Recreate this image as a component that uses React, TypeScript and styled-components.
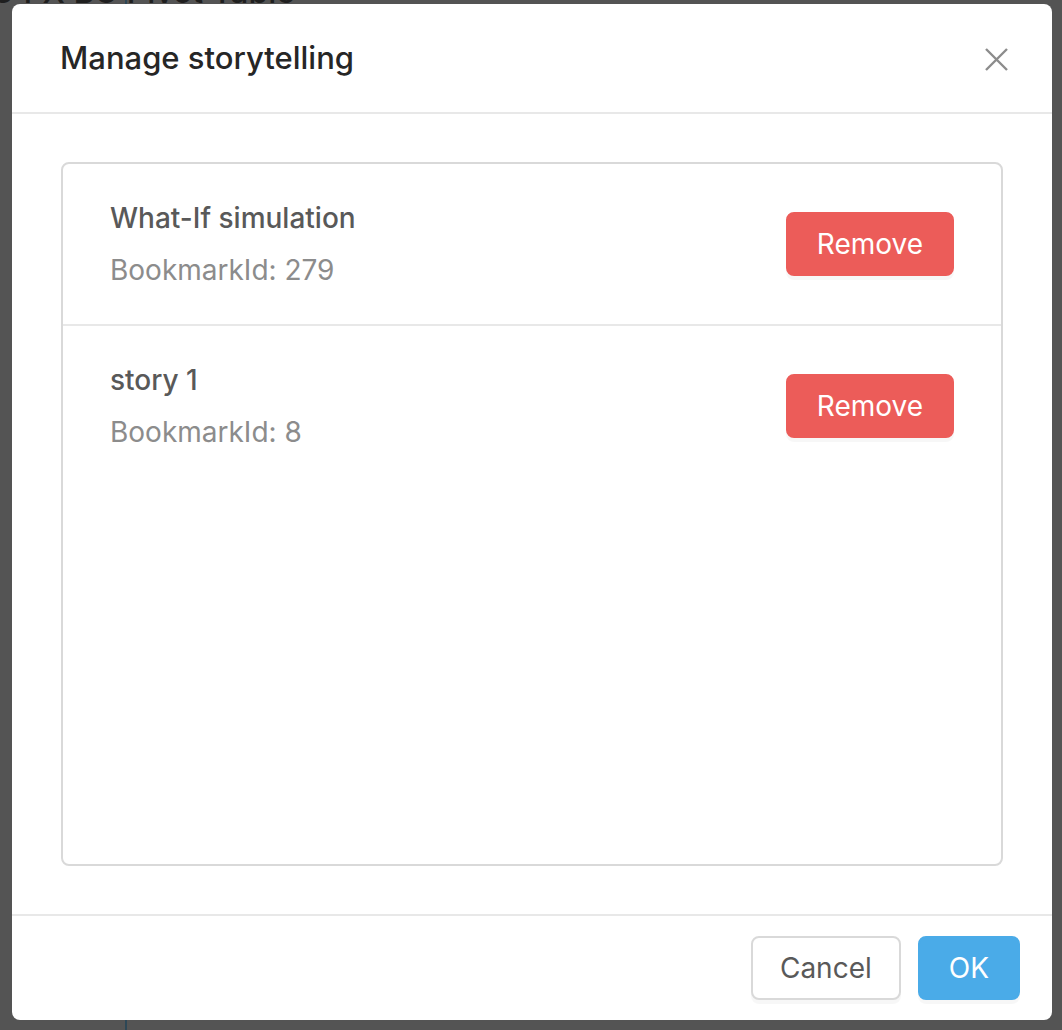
import styled, { createGlobalStyle } from "styled-components";

const GlobalStyle = createGlobalStyle`
  html, body {
    margin: 0;
    padding: 0;
    background: #545454;
    font-family: Inter, "Noto Sans", "Liberation Sans", sans-serif;
    -webkit-font-smoothing: antialiased;
  }
  * {
    box-sizing: border-box;
  }
`

const Page = styled.div`
  position: fixed;
  inset: 0;
  overflow: hidden;
  background: #545454;
`

const PageTitle = styled.h1`
  margin: -24px 0 0 -30px;
  font-size: 32px;
  line-height: 32px;
  font-weight: 500;
  color: #1f1f1f;
  white-space: nowrap;
`

const PageRule = styled.div`
  position: absolute;
  top: 0;
  bottom: 0;
  left: 125px;
  width: 2px;
  background: #2d4756;
`

const Overlay = styled.div`
  position: fixed;
  inset: 0;
  display: flex;
  padding: 4px 10px 10px 12px;
`

const Modal = styled.div`
  flex: 1;
  display: flex;
  flex-direction: column;
  background: #fff;
  border-radius: 8px;
  overflow: hidden;
`

const Header = styled.div`
  position: relative;
  display: flex;
  align-items: center;
  height: 110px;
  padding: 0 48px;
  border-bottom: 2px solid #e8e8e8;
`

const Title = styled.h2`
  margin: 0;
  font-size: 31px;
  line-height: 44px;
  font-weight: 500;
  color: #262626;
`

const CloseButton = styled.button`
  position: absolute;
  top: 0;
  right: 0;
  width: 112px;
  height: 110px;
  display: flex;
  align-items: center;
  justify-content: center;
  border: 0;
  background: transparent;
  cursor: pointer;
  color: #8c8c8c;
  padding: 0;
`

const Body = styled.div`
  flex: 1;
  padding: 48px 49px;
`

const ListBox = styled.div`
  height: 704px;
  border: 2px solid #d9d9d9;
  border-radius: 8px;
`

const Row = styled.div`
  display: flex;
  align-items: center;
  justify-content: space-between;
  padding: 32px 47px;
  border-bottom: 2px solid #e8e8e8;

  &:last-child {
    border-bottom: 0;
  }
`

const Meta = styled.div`
  display: flex;
  flex-direction: column;
  gap: 8px;
`

const ItemTitle = styled.div`
  font-size: 28px;
  line-height: 44px;
  font-weight: 500;
  color: #595959;
`

const ItemDesc = styled.div`
  font-size: 28px;
  line-height: 44px;
  color: #8c8c8c;
`

const Button = styled.button<{ $variant: "danger" | "primary" | "default" }>`
  height: 64px;
  padding: 0 ${(p) => (p.$variant === "default" ? "27px" : "29px")};
  border-radius: 8px;
  font-family: inherit;
  font-size: 28px;
  font-weight: 400;
  cursor: pointer;
  box-shadow: 0 4px 0 rgba(0, 0, 0, 0.03);
  border: 2px solid
    ${(p) => (p.$variant === "danger" ? "#ec5c59" : p.$variant === "primary" ? "#4aabe8" : "#d9d9d9")};
  background: ${(p) => (p.$variant === "danger" ? "#ec5c59" : p.$variant === "primary" ? "#4aabe8" : "#fff")};
  color: ${(p) => (p.$variant === "default" ? "#595959" : "#fff")};
`

const Footer = styled.div`
  display: flex;
  justify-content: flex-end;
  gap: 17px;
  padding: 20px 32px;
  border-top: 2px solid #e8e8e8;
`

const stories = [
  { name: "What-If simulation", bookmarkId: 279 },
  { name: "story 1", bookmarkId: 8 },
]

const CloseIcon = () => (
  <svg width="23" height="23" viewBox="0 0 23 23" fill="none">
    <path d="M1 1L22 22M22 1L1 22" stroke="currentColor" strokeWidth="2.4" />
  </svg>
)

export default function App() {
  return (
    <>
      <GlobalStyle />
      <Page>
        <PageTitle>PO FX BU Pivot Table</PageTitle>
        <PageRule />
      </Page>
      <Overlay>
        <Modal>
          <Header>
            <Title>Manage storytelling</Title>
            <CloseButton aria-label="Close">
              <CloseIcon />
            </CloseButton>
          </Header>
          <Body>
            <ListBox>
              {stories.map((s) => (
                <Row key={s.bookmarkId}>
                  <Meta>
                    <ItemTitle>{s.name}</ItemTitle>
                    <ItemDesc>BookmarkId: {s.bookmarkId}</ItemDesc>
                  </Meta>
                  <Button $variant="danger">Remove</Button>
                </Row>
              ))}
            </ListBox>
          </Body>
          <Footer>
            <Button $variant="default">Cancel</Button>
            <Button $variant="primary">OK</Button>
          </Footer>
        </Modal>
      </Overlay>
    </>
  )
}
